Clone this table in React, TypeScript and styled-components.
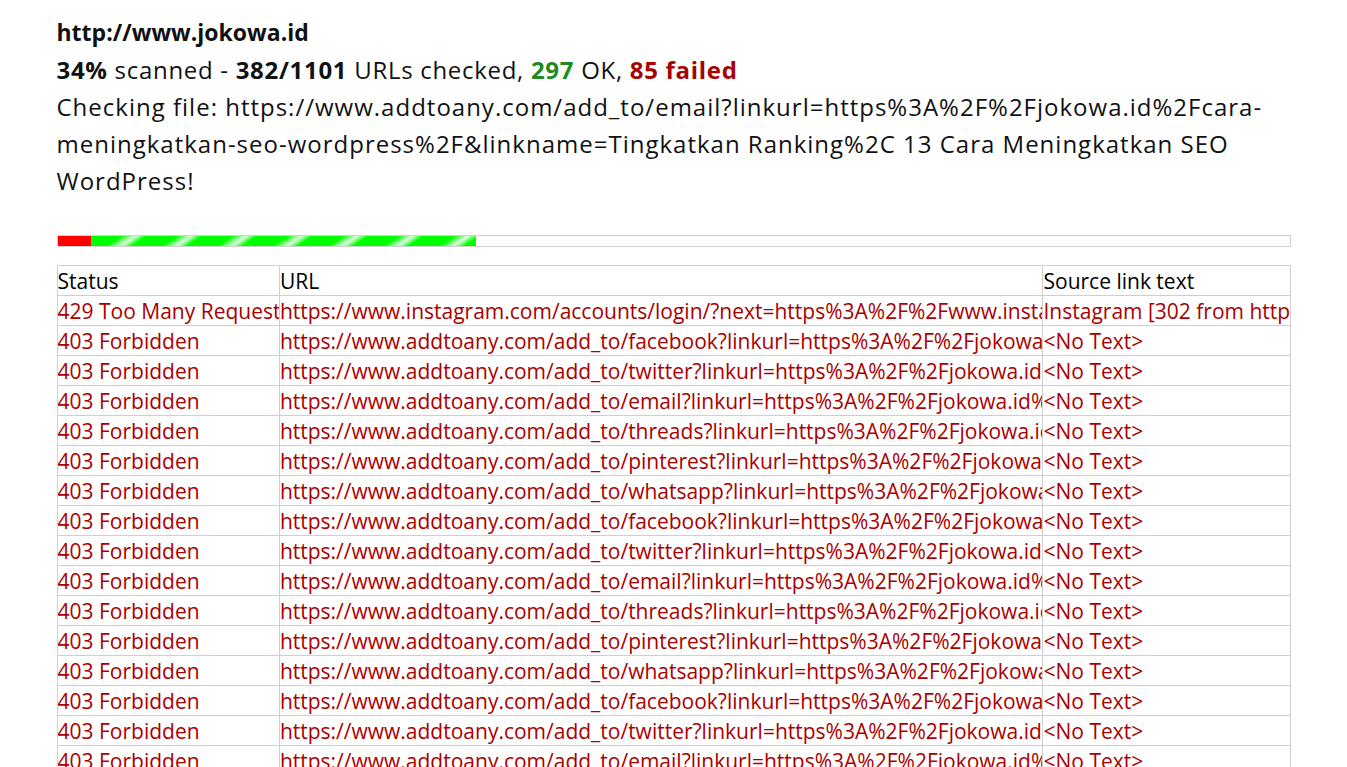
import React from "react";
import styled, { createGlobalStyle } from "styled-components";

const Global = createGlobalStyle`
  html, body { margin: 0; padding: 0; overflow: hidden; background: #fff; }
  body { font-family: "Open Sans", "Liberation Sans", sans-serif; color: #111; }
`;

const Page = styled.div`
  width: 1234px;
  margin: 0 auto;
  padding-top: 14px;
`;

const Summary = styled.div`
  line-height: 37px;
  color: #111;
`;

const Line = styled.div<{ $size: number; $spacing: number }>`
  font-size: ${(p) => p.$size}px;
  letter-spacing: ${(p) => p.$spacing}px;
`;

const Ok = styled.b`
  color: #1f8a1f;
`;

const Failed = styled.b`
  color: #aa0000;
`;

const Progress = styled.div`
  margin-top: 36px;
  height: 10px;
  border: 1px solid #d0d0d0;
  display: flex;
`;

const Segment = styled.div<{ $kind: "fail" | "ok" }>`
  height: 100%;
  background: ${(p) =>
    p.$kind === "fail"
      ? "#ff0000"
      : "repeating-linear-gradient(146deg, #00ff00 0px, #00ff00 17px, #e0ffe0 25px, #00ff00 31px)"};
`;

const Table = styled.table`
  margin-top: 18px;
  width: 100%;
  border-collapse: collapse;
  table-layout: fixed;
  font-size: 21px;
`;

const Th = styled.th<{ $w: string }>`
  width: ${(p) => p.$w};
  text-align: left;
  font-weight: normal;
  color: #000;
  border: 1px solid #cfcfcf;
  padding: 1px 0 0;
  height: 28px;
  line-height: 28px;
  white-space: nowrap;
  overflow: hidden;
`;

const Td = styled.td`
  border: 1px solid #cfcfcf;
  padding: 1px 0 0;
  height: 28px;
  line-height: 28px;
  white-space: nowrap;
  overflow: hidden;
  color: #aa0000;
`;

const services = ["facebook", "twitter", "email", "threads", "pinterest", "whatsapp"];

const rows: { status: string; url: string; text: string }[] = [
  {
    status: "429 Too Many Requests",
    url: "https://www.instagram.com/accounts/login/?next=https%3A%2F%2Fwww.instagram.com%2Fjokowa.id%2F&is_from_rle",
    text: "Instagram [302 from https://www.instagram.com/jokowa.id/]",
  },
];
for (let i = 0; i < 16; i++) {
  const s = services[i % services.length];
  rows.push({
    status: "403 Forbidden",
    url: `https://www.addtoany.com/add_to/${s}?linkurl=https%3A%2F%2Fjokowa.id%2Fcara-meningkatkan-seo-wordpress%2F&linkname=Tingkatkan%20Ranking`,
    text: "<No Text>",
  });
}

const total = 1101;
const checked = 382;
const failed = 85;

export default function App() {
  return (
    <>
      <Global />
      <Page>
        <Summary>
          <Line $size={23} $spacing={0}>
            <b>http://www.jokowa.id</b>
          </Line>
          <Line $size={24} $spacing={0.7}>
            <b>34%</b> scanned - <b>{checked}/{total}</b> URLs checked, <Ok>297</Ok> OK, <Failed>{failed} failed</Failed>
          </Line>
          <Line $size={24} $spacing={1}>
            Checking file: https://www.addtoany.com/add_to/email?linkurl=https%3A%2F%2Fjokowa.id%2Fcara-meningkatkan-seo-wordpress%2F&amp;linkname=Tingkatkan Ranking%2C 13 Cara Meningkatkan SEO WordPress!
          </Line>
        </Summary>
        <Progress>
          <Segment $kind="fail" style={{ width: "2.7%" }} />
          <Segment $kind="ok" style={{ width: "31.3%" }} />
        </Progress>
        <Table>
          <thead>
            <tr>
              <Th $w="18%">Status</Th>
              <Th $w="62%">URL</Th>
              <Th $w="20%">Source link text</Th>
            </tr>
          </thead>
          <tbody>
            {rows.map((r, i) => (
              <tr key={i}>
                <Td>{r.status}</Td>
                <Td>{r.url}</Td>
                <Td>{r.text}</Td>
              </tr>
            ))}
          </tbody>
        </Table>
      </Page>
    </>
  );
}
